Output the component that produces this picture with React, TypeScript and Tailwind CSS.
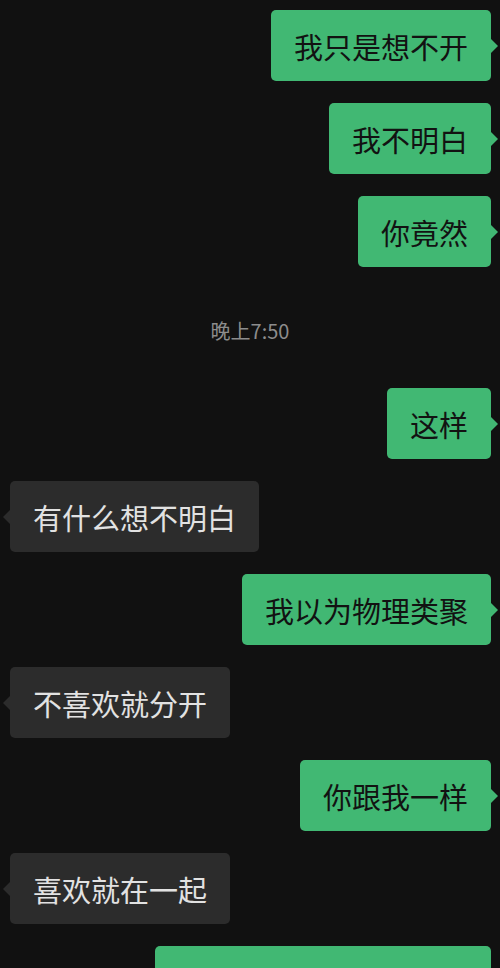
import React from 'react';

type Msg = { side: 'me' | 'other' | 'time'; text: string };

const messages: Msg[] = [
    { side: 'me', text: '我只是想不开' },
    { side: 'me', text: '我不明白' },
    { side: 'me', text: '你竟然' },
    { side: 'time', text: '晚上7:50' },
    { side: 'me', text: '这样' },
    { side: 'other', text: '有什么想不明白' },
    { side: 'me', text: '我以为物理类聚' },
    { side: 'other', text: '不喜欢就分开' },
    { side: 'me', text: '你跟我一样' },
    { side: 'other', text: '喜欢就在一起' },
    { side: 'me', text: '我以为你也会这样想的' },
];

const Bubble: React.FC<{ mine: boolean; text: string }> = ({ mine, text }) => {
    if (mine) {
        return (
            <div className="flex justify-end pr-[9px]">
                <div className="relative rounded-[5px] bg-[#41b873] px-[23px] pt-[16px] pb-[14px] text-[29px] leading-[41px] text-[#121212]">
                    {text}
                    <div className="absolute right-[-7px] top-1/2 -translate-y-1/2 h-0 w-0 border-y-[7px] border-l-[7px] border-y-transparent border-l-[#41b873]" />
                </div>
            </div>
        );
    }
    return (
        <div className="flex justify-start pl-[10px]">
            <div className="relative rounded-[5px] bg-[#2c2c2c] px-[23px] pt-[16px] pb-[14px] text-[29px] leading-[41px] text-[#e2e2e2]">
                {text}
                <div className="absolute left-[-7px] top-1/2 -translate-y-1/2 h-0 w-0 border-y-[7px] border-r-[7px] border-y-transparent border-r-[#2c2c2c]" />
            </div>
        </div>
    );
};

export default function App() {
    return (
        <div
            className="h-[968px] w-[500px] overflow-hidden bg-[#111111] pt-[10px]"
            style={{ fontFamily: '"Noto Sans CJK SC", "Noto Sans", sans-serif' }}
        >
            <div className="flex flex-col gap-[22px]">
                {messages.map((m, i) =>
                    m.side === 'time' ? (
                        <div key={i} className="mt-[28px] mb-[21px] text-center text-[20px] leading-[28px] text-[#8c8c8c]">
                            {m.text}
                        </div>
                    ) : (
                        <Bubble key={i} mine={m.side === 'me'} text={m.text} />
                    )
                )}
            </div>
        </div>
    );
}
